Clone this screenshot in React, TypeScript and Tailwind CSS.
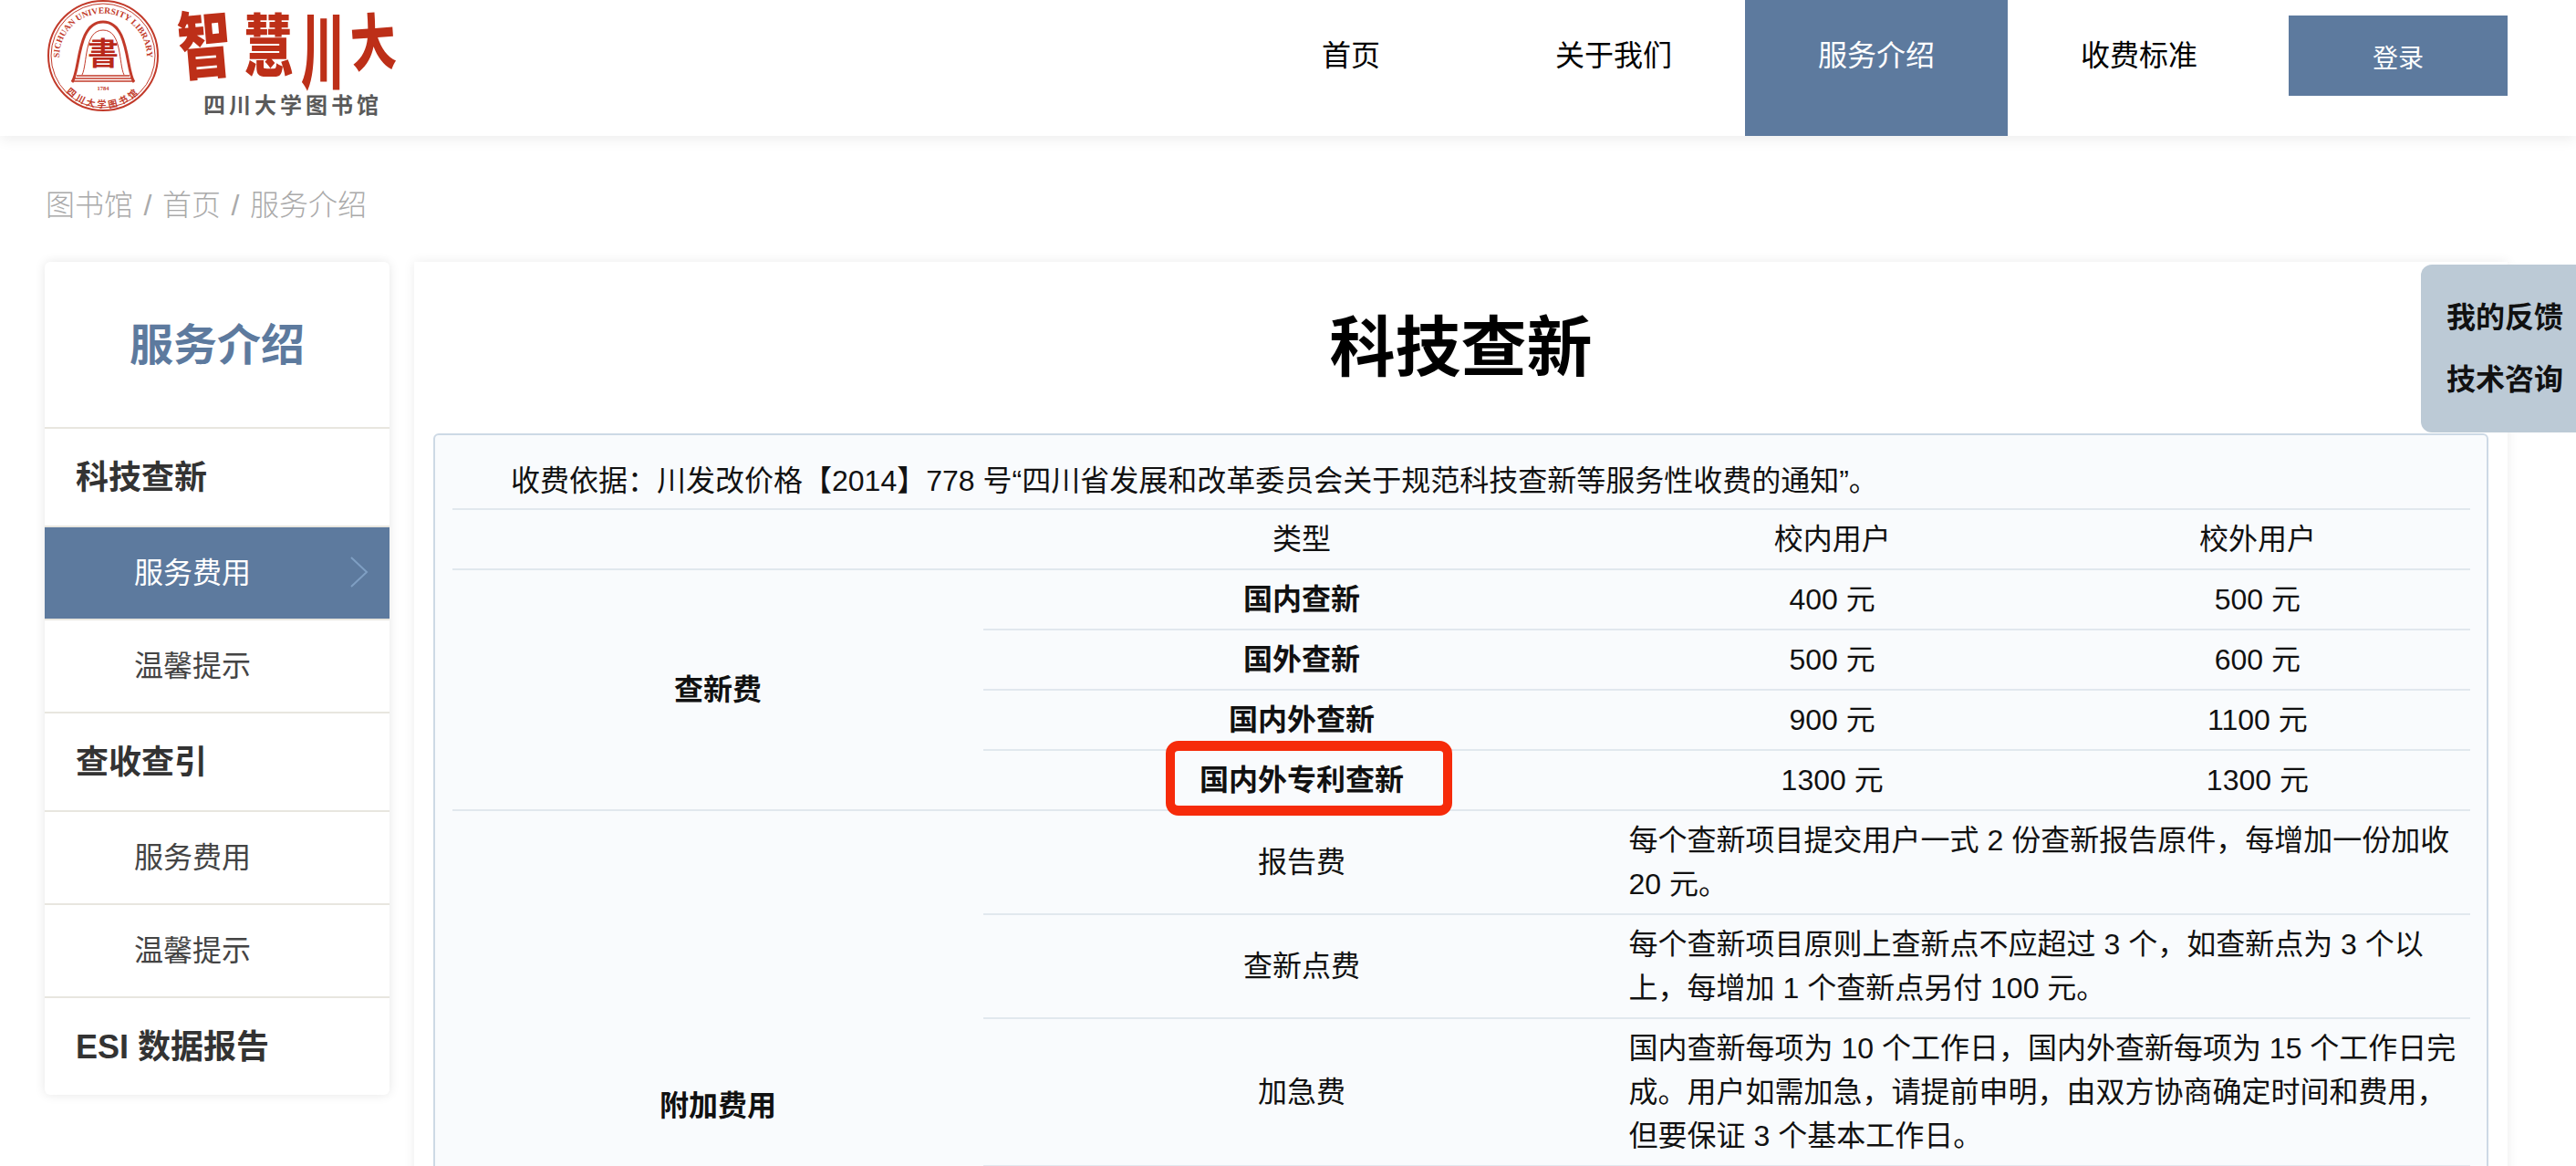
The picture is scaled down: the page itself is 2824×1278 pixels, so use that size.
import React from 'react';

const navItems = ['首页', '关于我们', '服务介绍', '收费标准'];

const searchFees = [
  { name: '国内查新', inside: '400 元', outside: '500 元' },
  { name: '国外查新', inside: '500 元', outside: '600 元' },
  { name: '国内外查新', inside: '900 元', outside: '1100 元' },
  { name: '国内外专利查新', inside: '1300 元', outside: '1300 元' },
];

const extraFees = [
  { name: '报告费', text: '每个查新项目提交用户一式 2 份查新报告原件，每增加一份加收 20 元。' },
  { name: '查新点费', text: '每个查新项目原则上查新点不应超过 3 个，如查新点为 3 个以上，每增加 1 个查新点另付 100 元。' },
  { name: '加急费', text: '国内查新每项为 10 个工作日，国内外查新每项为 15 个工作日完成。用户如需加急，请提前申明，由双方协商确定时间和费用，但要保证 3 个基本工作日。' },
];

const Logo: React.FC = () => (
  <svg width="460" height="149" viewBox="0 0 460 149" className="shrink-0">
    <defs>
      <path id="sealTop" d="M 70 84 A 48 48 0 1 1 156 84" />
      <path id="sealBottom" d="M 62 84 A 55 55 0 0 0 164 84" />
    </defs>
    <g fill="none" stroke="#c23a2a">
      <circle cx="113" cy="61" r="60" strokeWidth="2" />
      <circle cx="113" cy="61" r="57" strokeWidth="1" />
      <path d="M79 90 C 88 78 84 24 113 24 C 142 24 138 78 147 90" strokeWidth="3" />
      <path d="M90 82 C 96 70 92 33 113 33 C 134 33 130 70 136 82" strokeWidth="1" />
      <path d="M84 83 H142 M82 86 H144 M80 89 H146" strokeWidth="1.5" />
    </g>
    <text x="113" y="71" textAnchor="middle" fontSize="34" fontWeight="700" fill="#b9281a" className="[font-family:'Noto_Sans_CJK_TC',sans-serif]">書</text>
    <g fill="#c23a2a" fontWeight="700" className="[font-family:'Liberation_Serif',serif]">
      <text fontSize="9.5">
        <textPath href="#sealTop" startOffset="50%" textAnchor="middle">SICHUAN UNIVERSITY LIBRARY</textPath>
      </text>
      <text x="113" y="99" textAnchor="middle" fontSize="6.5">1784</text>
    </g>
    <text fontSize="10" fontWeight="700" fill="#c23a2a" letterSpacing="3" className="[font-family:'Noto_Sans_CJK_SC',sans-serif]">
      <textPath href="#sealBottom" startOffset="50%" textAnchor="middle">四川大学图书馆</textPath>
    </text>
    <g fill="#bd2f18" fontSize="54" fontWeight="900" className="[font-family:'Noto_Sans_CJK_SC',sans-serif]">
      <text transform="translate(198 82) rotate(-5) scale(1.08 1.5)">智</text>
      <text transform="translate(267 78) scale(1 1.4)">慧</text>
      <text transform="translate(330 90) scale(0.88 1.7)">川</text>
      <text transform="translate(386 73) rotate(-4) scale(0.92 1.25)">大</text>
    </g>
    <text x="223" y="124" fontSize="24" fontWeight="700" fill="#5a5a5a" letterSpacing="4" className="[font-family:'Noto_Sans_CJK_SC',sans-serif]">四川大学图书馆</text>
  </svg>
);

const Header: React.FC = () => (
  <header className="relative z-10 flex h-[149px] bg-white shadow-[0_4px_14px_rgba(0,0,0,0.07)]">
    <div className="flex-1">
      <Logo />
    </div>
    <nav className="flex pr-[75px]">
      {navItems.map((item) => (
        <a
          key={item}
          className={`flex w-[288px] justify-center pt-[37px] text-[32px] leading-[48px] ${
            item === '服务介绍' ? 'bg-[#5d7a9e] text-white' : 'text-black'
          }`}
        >
          {item}
        </a>
      ))}
      <button className="ml-[20px] mt-[17px] flex h-[88px] w-[240px] items-center justify-center bg-[#5d7a9e] pt-2 text-[28px] text-white">
        登录
      </button>
    </nav>
  </header>
);

const Breadcrumb: React.FC = () => (
  <div className="flex h-[138px] pl-[50px] pt-[52px] text-[32px] font-light leading-[48px] text-[#aaaaaa]">
    <span>图书馆</span>
    <span className="w-[32px] text-center">/</span>
    <span>首页</span>
    <span className="w-[32px] text-center">/</span>
    <span>服务介绍</span>
  </div>
);

const SideGroup: React.FC<{ title: string }> = ({ title }) => (
  <div className="flex h-[108px] items-center border-b-2 border-[#e8e6df] pl-[34px] pt-[2px] text-[36px] font-bold text-[#333333]">
    {title}
  </div>
);

const SideItem: React.FC<{ label: string; active?: boolean }> = ({ label, active }) => (
  <div
    className={`relative flex h-[102px] items-center border-b-2 border-[#e8e6df] pl-[98px] text-[32px] ${
      active ? 'bg-[#5d7a9e] text-white' : 'text-[#444444]'
    }`}
  >
    {label}
    {active && (
      <svg width="20" height="34" viewBox="0 0 20 34" className="absolute right-[23px] top-[32px]" fill="none" stroke="#7f9fc3" strokeWidth="2">
        <path d="M1 1 L18 17 L1 33" />
      </svg>
    )}
  </div>
);

const Sidebar: React.FC = () => (
  <aside className="h-[913px] w-[378px] shrink-0 rounded-md bg-white shadow-[0_0_12px_rgba(0,0,0,0.1)]">
    <div className="flex h-[183px] items-center justify-center border-b-2 border-[#e8e6df] pt-[2px] text-[48px] font-bold text-[#5d7a9e]">
      服务介绍
    </div>
    <SideGroup title="科技查新" />
    <SideItem label="服务费用" active />
    <SideItem label="温馨提示" />
    <SideGroup title="查收查引" />
    <SideItem label="服务费用" />
    <SideItem label="温馨提示" />
    <div className="flex h-[108px] items-center pl-[34px] text-[36px] font-bold text-[#333333]">ESI 数据报告</div>
  </aside>
);

const cell = 'border-t-2 border-[#e1e8ee] px-3 py-2 text-center align-middle';

const FeeTable: React.FC = () => (
  <table className="w-full table-fixed border-separate border-spacing-0 text-[32px] leading-[48px] text-[#111111]">
    <colgroup>
      <col className="w-[582px]" />
      <col className="w-[697px]" />
      <col className="w-[466px]" />
      <col className="w-[466px]" />
    </colgroup>
    <tbody>
      <tr>
        <td className={cell}></td>
        <td className={cell}>类型</td>
        <td className={cell}>校内用户</td>
        <td className={cell}>校外用户</td>
      </tr>
      {searchFees.map((fee, i) => (
        <tr key={fee.name}>
          {i === 0 && (
            <td rowSpan={4} className={`${cell} font-bold`}>
              查新费
            </td>
          )}
          <td className={`${cell} relative font-bold`}>
            {fee.name}
            {fee.name === '国内外专利查新' && (
              <span className="absolute left-[200px] top-[-11px] h-[82px] w-[314px] rounded-[14px] border-x-[10px] border-y-[11px] border-[#f62b0a]" />
            )}
          </td>
          <td className={cell}>{fee.inside}</td>
          <td className={cell}>{fee.outside}</td>
        </tr>
      ))}
      {extraFees.map((fee, i) => (
        <tr key={fee.name}>
          {i === 0 && (
            <td rowSpan={4} className={`${cell} font-bold`}>
              附加费用
            </td>
          )}
          <td className={cell}>{fee.name}</td>
          <td colSpan={2} className="border-t-2 border-[#e1e8ee] py-2 pl-[10px] pr-3 text-left">
            {fee.text}
          </td>
        </tr>
      ))}
      <tr>
        <td colSpan={3} className="h-[258px] border-t-2 border-[#e1e8ee]"></td>
      </tr>
    </tbody>
  </table>
);

const Content: React.FC = () => (
  <main className="flex-1 bg-white px-[21px] shadow-[0_0_12px_rgba(0,0,0,0.08)]">
    <h1 className="flex h-[188px] items-center justify-center text-[72px] font-bold text-black">科技查新</h1>
    <div className="rounded-md border-2 border-[#cdd9e5] bg-[#f9fbfd] pl-[19px] pr-[18px]">
      <p className="pb-[6px] pl-[64px] pt-[26px] text-[32px] leading-[48px] text-[#111111]">
        收费依据：川发改价格【2014】778 号“四川省发展和改革委员会关于规范科技查新等服务性收费的通知”。
      </p>
      <FeeTable />
    </div>
  </main>
);

export default function App() {
  return (
    <div
      lang="zh-CN"
      className="relative h-[1278px] overflow-hidden bg-white [font-family:'Liberation_Sans','Noto_Sans_CJK_SC',sans-serif]"
    >
      <Header />
      <Breadcrumb />
      <div className="flex gap-[27px] pl-[49px] pr-[75px]">
        <Sidebar />
        <Content />
      </div>
      <div className="absolute right-0 top-[290px] flex h-[184px] w-[170px] flex-col justify-center gap-[20px] rounded-l-xl bg-[#bccad6] pl-[28px] text-[32px] font-bold leading-[48px] text-[#111111]">
        <span>我的反馈</span>
        <span>技术咨询</span>
      </div>
    </div>
  );
}
